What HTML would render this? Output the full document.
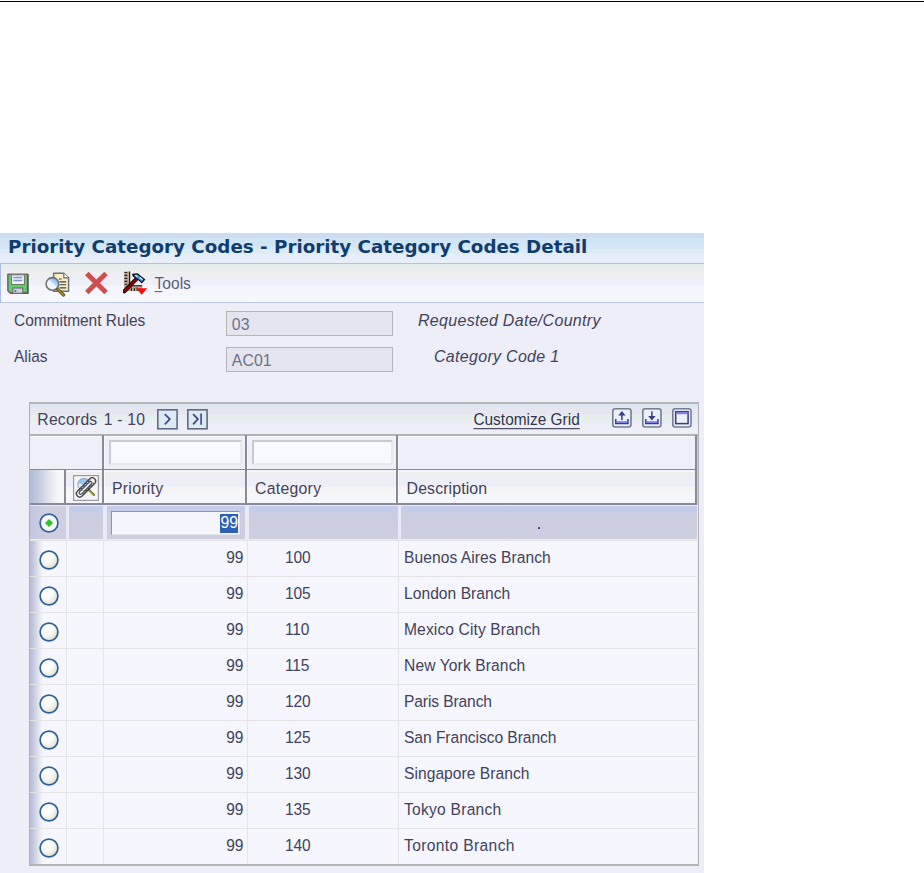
<!DOCTYPE html>
<html>
<head>
<meta charset="utf-8">
<title>Priority Category Codes - Priority Category Codes Detail</title>
<style>
html,body{margin:0;padding:0;background:#fff;}
body{width:924px;height:873px;position:relative;overflow:hidden;font-family:"Liberation Sans",sans-serif;color:#42425a;}
.abs{position:absolute;}
#topline{left:0;top:1px;width:924px;height:1px;background:#000;}
#panel{left:0;top:233px;width:704px;height:640px;background:#eeeef8;}
#titlebar{left:0;top:233px;width:704px;height:30px;background:linear-gradient(#cddcf5 0px,#cddcf5 4px,#cbe3f4 5px,#d2e5f5 10px,#d8e8f6 16px,#dceef6 17px,#dde9f6 19px,#e4edf8 21px,#e8eefa 30px);}
#title{left:8px;top:236px;white-space:nowrap;font-family:"DejaVu Sans","Liberation Sans",sans-serif;font-weight:bold;font-size:18.3px;line-height:22px;color:#103d6d;}
#toolbar{left:0;top:263px;width:703px;height:38px;border:1px solid #b7c1d8;border-right:none;border-left-color:#a9bde0;border-bottom-color:#b9c7e0;background:linear-gradient(#e6eeee 0px,#e8eeec 6px,#efefef 7px,#efefef 11px,#eeeef7 12px,#efeff8 20px,#f5f5fd 22px,#f7f7fe 38px);}
.t{white-space:nowrap;line-height:18px;transform:scaleY(1.055);transform-origin:0 14.4px;}
.lbl{font-size:15.45px;}
.it{font-style:italic;font-size:16px;letter-spacing:0.3px;}
.ro{border:1px solid #b6b6b6;background:#e5e5ef;box-sizing:border-box;}
.rotxt{font-size:15.9px;color:#707088;letter-spacing:0.05px;}
#grid{left:29px;top:402px;width:670px;height:464px;box-sizing:border-box;background:linear-gradient(#dde5f0 0px,#dde5f0 4.6px,#e6e6f0 5.2px,#e6e6f0 12.8px,#e6eeee 13.4px,#e6eeee 19.3px,#eeeef8 19.9px,#eeeef8 40px);}
.hl{background:#8a8a96;}
.cell{font-size:15.6px;}
.rl{left:30px;width:667px;height:1.3px;background:#e3e3e5;}
.cl{top:505px;width:1.3px;height:359px;background:#e4e4e6;}
.radio{width:20px;height:20px;box-sizing:border-box;border:1.7px solid #2f6196;border-radius:50%;background:radial-gradient(circle at 35% 32%,#ffffff 0%,#fcfcfc 40%,#e0e0d4 100%);}
.sel{background:linear-gradient(#c2cce9 0px,#c4cde8 5px,#cdcde0 8px,#cecee0 100%);}
.pg{width:21px;height:20px;box-sizing:border-box;border:1.5px solid #6a7a96;background:#f4f6fc;}
</style>
</head>
<body>
<div id="topline" class="abs"></div>
<div id="panel" class="abs"></div>
<div id="titlebar" class="abs"></div>
<div id="title" class="abs">Priority Category Codes - Priority Category Codes Detail</div>
<div id="toolbar" class="abs"></div>
<svg class="abs" style="left:7px;top:272.6px" width="23" height="23" viewBox="0 0 23 23"><path d="M0.9 1.2 H20.7 V20.3 H3.8 L0.9 17.6 Z" fill="#60cf69" stroke="#6a6a6a" stroke-width="1.6" stroke-linejoin="round"/><path d="M20.7 1.2 V20.3 H3.8" fill="none" stroke="#585858" stroke-width="1.6"/><rect x="4.5" y="1.8" width="12.9" height="9.7" fill="#f6f6ff" stroke="#757575" stroke-width="1.1"/><rect x="6.4" y="3.7" width="8.8" height="1.6" fill="#8092d2"/><rect x="6.4" y="6.7" width="8.8" height="1.6" fill="#8092d2"/><rect x="5.8" y="15" width="10" height="5.3" fill="#d2d2d8" stroke="#6a6a6a" stroke-width="1.1"/><rect x="7.6" y="17.1" width="1.7" height="1.7" fill="#3a55cc"/></svg>
<svg class="abs" style="left:44.5px;top:271.5px" width="26" height="25" viewBox="0 0 26 25"><defs><linearGradient id="lg" x1="0.85" y1="0.1" x2="0.2" y2="0.85"><stop offset="0" stop-color="#62b0f0"/><stop offset="0.45" stop-color="#c4e2fa"/><stop offset="0.55" stop-color="#eef6fe"/><stop offset="1" stop-color="#f4f8ff"/></linearGradient></defs><path d="M8.6 1.2 H18.8 L23.6 5.8 V19.2 H8.6 Z" fill="#f7efc8" stroke="#6e6e6e" stroke-width="1.4" stroke-linejoin="round"/><path d="M18.8 1.2 V5.8 H23.6" fill="#fffdf0" stroke="#6e6e6e" stroke-width="1.2"/><path d="M13.8 7 H16.6 M14.6 9.9 H21.2 M14.6 12.8 H21.2 M14.6 15.9 H21.2" stroke="#3e3e3e" stroke-width="1.1"/><circle cx="7.4" cy="11.9" r="6.3" fill="url(#lg)" stroke="#707070" stroke-width="1.6"/><path d="M12.6 17.4 L18.6 23" stroke="#5e5414" stroke-width="3.2" stroke-linecap="round"/><path d="M12.6 17.4 L18.6 23" stroke="#97872c" stroke-width="1.8" stroke-linecap="round"/></svg>
<svg class="abs" style="left:84px;top:271px" width="25" height="24" viewBox="0 0 25 24"><path d="M2.8 2.6 L22 21.4 M22 2.6 L2.8 21.4" stroke="#d24c4c" stroke-width="4.9" stroke-linecap="butt"/></svg>
<svg class="abs" style="left:123px;top:271px" width="25" height="24" viewBox="0 0 25 24"><rect x="1.2" y="0.5" width="5.9" height="19.6" fill="#b6a791"/><rect x="6" y="0.5" width="1.2" height="14" fill="#2a2020"/><path d="M1.4 1.5 H4.2 M1.4 4.4 H4.2 M1.4 7.4 H4.2 M1.4 10.4 H4.2 M1.4 13.3 H4.2" stroke="#2a2020" stroke-width="1.1"/><rect x="7" y="14.2" width="12.2" height="5.9" fill="#b6a791"/><rect x="6.4" y="14" width="12.8" height="1.4" fill="#4a4038"/><path d="M8.4 16.6 V20 M11.4 17 V20 M14.2 16.6 V20" stroke="#3a3028" stroke-width="1.2"/><path d="M1.4 20.3 L13.2 8.2" stroke="#160606" stroke-width="4" stroke-linecap="round"/><path d="M1.8 20 L13.2 8.4" stroke="#8c0808" stroke-width="2.2" stroke-linecap="round"/><path d="M9.2 2.8 L14.6 2.2 L22.4 8.6 L18.8 12.4 L16 9.8 L13 7.8 L9.6 5.2 Z" fill="#0c0c14"/><path d="M11 4 L14 3.6 L20.6 8.6 L18.6 10.8 L16.6 8.8 L13.6 7 Z" fill="#2f9ee8"/><path d="M12.2 4.2 L14.4 5.6 M16.8 6.6 L19.4 8.4" stroke="#eaf6ff" stroke-width="1.2"/><path d="M13.3 17.2 H24.1 L18.7 23.8 Z" fill="#fb0a0a"/></svg>
<div class="abs t" style="left:154.5px;top:274.5px;font-size:15.6px;color:#5c5c7a;"><span style="text-decoration:underline;text-underline-offset:2.3px;">T</span>ools</div>
<div class="abs t lbl" style="left:14px;top:311.5px;">Commitment Rules</div>
<div class="abs t lbl" style="left:14px;top:347.5px;">Alias</div>
<div class="abs ro" style="left:226.4px;top:311px;width:166.6px;height:25px;"></div>
<div class="abs ro" style="left:226.4px;top:347px;width:166.6px;height:25px;"></div>
<div class="abs t rotxt" style="left:231.8px;top:315.9px;">03</div>
<div class="abs t rotxt" style="left:231.8px;top:351.9px;">AC01</div>
<div class="abs t it" style="left:418px;top:311.5px;">Requested Date/Country</div>
<div class="abs t it" style="left:434px;top:347.5px;">Category Code 1</div>
<div id="grid" class="abs"></div>
<div class="abs" style="left:29px;top:402.2px;width:670px;height:1.7px;background:#afb5b5;"></div>
<div class="abs" style="left:28.8px;top:402.2px;width:1.3px;height:463.8px;background:#b0b0b0;"></div>
<div class="abs" style="left:697.8px;top:402.2px;width:1.5px;height:463.8px;background:#b2b2b2;"></div>
<div class="abs" style="left:29px;top:864.4px;width:670.3px;height:1.8px;background:#b2b2b2;"></div>
<div class="abs t cell" style="left:37.3px;top:410.7px;font-size:15.7px;letter-spacing:0.25px;">Records <span style="margin-left:1.6px">1 - 10</span></div>
<svg class="abs" style="left:157.3px;top:408.7px" width="22" height="22" viewBox="0 0 22 22"><rect x="0.8" y="0.8" width="19.3" height="19" fill="#ddeaf4" stroke="#5f6b82" stroke-width="1.6"/><path d="M7.8 5.2 L12.8 10.1 L7.8 15.4" fill="none" stroke="#3c4888" stroke-width="1.7"/></svg>
<svg class="abs" style="left:187.2px;top:408.7px" width="22" height="22" viewBox="0 0 22 22"><rect x="0.8" y="0.8" width="19.3" height="19" fill="#ddeaf4" stroke="#5f6b82" stroke-width="1.6"/><path d="M6.1 5.2 L10.9 10.1 L6.1 15.4" fill="none" stroke="#3c4888" stroke-width="1.7"/><path d="M14.1 4.4 V15.8" fill="none" stroke="#3c4888" stroke-width="1.6"/></svg>
<div class="abs t cell" style="left:473.4px;top:411px;font-size:15.45px;text-decoration:underline;text-underline-offset:2.6px;text-decoration-thickness:1.3px;color:#34344c;">Customize Grid</div>
<svg class="abs" style="left:612.2px;top:408.2px" width="21" height="20" viewBox="0 0 21 20"><rect x="0.8" y="0.8" width="18.2" height="18.2" rx="2.5" ry="2.5" fill="#eaf0f9" stroke="#747e8e" stroke-width="1.6"/><path d="M9.9 2.9 L6.2 7.5 H13.6 Z" fill="#3c3c80"/><rect x="9.15" y="6.5" width="1.5" height="5.6" fill="#3c3c80"/><path d="M3.8 11 V15.6 H16 V11" fill="none" stroke="#3a3a82" stroke-width="1.5"/><rect x="4.6" y="13.2" width="10.6" height="1.7" fill="#7c7cf0"/></svg>
<svg class="abs" style="left:642.2px;top:408.2px" width="21" height="20" viewBox="0 0 21 20"><rect x="0.8" y="0.8" width="18.2" height="18.2" rx="2.5" ry="2.5" fill="#eaf0f9" stroke="#747e8e" stroke-width="1.6"/><path d="M9.9 12.6 L6.2 8 H13.6 Z" fill="#3c3c80"/><rect x="9.15" y="3.3" width="1.5" height="5.6" fill="#3c3c80"/><path d="M3.8 11 V15.6 H16 V11" fill="none" stroke="#3a3a82" stroke-width="1.5"/><rect x="4.6" y="13.2" width="10.6" height="1.7" fill="#7c7cf0"/></svg>
<svg class="abs" style="left:672.2px;top:408.2px" width="21" height="20" viewBox="0 0 21 20"><rect x="0.8" y="0.8" width="18.2" height="18.2" rx="2.5" ry="2.5" fill="#eaf0f9" stroke="#747e8e" stroke-width="1.6"/><rect x="3.7" y="3.7" width="12.4" height="11.9" fill="#eef0fa" stroke="#3a3a82" stroke-width="1.5"/><rect x="4.5" y="4.3" width="10.8" height="1.9" fill="#7c7cf0"/></svg>
<div class="abs" style="left:30px;top:434px;width:667px;height:71px;background:#efeff7;"></div>
<div class="abs" style="left:30px;top:470px;width:667px;height:34px;background:linear-gradient(#f4f4fc 0px,#f4f4fc 1.5px,#eeeeee 1.6px,#eeeeee 6px,#eeeef7 6.6px,#eeeef7 16.5px,#f5f5f5 17px,#f5f5f5 23px,#f6f6fd 23.6px,#f6f6fd 34px);"></div>
<div class="abs" style="left:30px;top:470px;width:35px;height:34px;background:linear-gradient(90deg,#b2bed8 0px,#bfc8dd 7px,#d0d5e4 13px,#e2e5ee 19px,#f1f2f7 25px,#f8f8fc 30px,#f6f6fb 35px);"></div>
<div class="abs" style="left:30px;top:505px;width:667px;height:359px;background:#f6f6fe;"></div>
<div class="abs" style="left:30px;top:505px;width:14px;height:359px;background:linear-gradient(90deg,#b5bad6 0px,#c9cce0 4px,#e0e2ee 8px,#f6f6fe 13px);"></div>
<div class="abs" style="left:30px;top:433.9px;width:668px;height:1.7px;background:#afb5b5;"></div>
<div class="abs" style="left:30px;top:435.6px;width:666px;height:0.8px;background:#f7f7ff;"></div>
<div class="abs hl" style="left:30px;top:468.7px;width:667px;height:1.5px;"></div>
<div class="abs hl" style="left:30px;top:503.1px;width:667px;height:1.5px;"></div>
<div class="abs hl" style="left:102px;top:435.4px;width:1.6px;height:69px;"></div>
<div class="abs" style="left:103.6px;top:436px;width:0.9px;height:32.7px;background:#f7f7ff;"></div>
<div class="abs" style="left:103.6px;top:470.2px;width:0.9px;height:32.9px;background:#f9f9ff;"></div>
<div class="abs hl" style="left:245px;top:435.4px;width:1.6px;height:69px;"></div>
<div class="abs" style="left:246.6px;top:436px;width:0.9px;height:32.7px;background:#f7f7ff;"></div>
<div class="abs" style="left:246.6px;top:470.2px;width:0.9px;height:32.9px;background:#f9f9ff;"></div>
<div class="abs hl" style="left:396.2px;top:435.4px;width:1.6px;height:69px;"></div>
<div class="abs" style="left:397.8px;top:436px;width:0.9px;height:32.7px;background:#f7f7ff;"></div>
<div class="abs" style="left:397.8px;top:470.2px;width:0.9px;height:32.9px;background:#f9f9ff;"></div>
<div class="abs hl" style="left:695px;top:435.4px;width:1.6px;height:69px;"></div>
<div class="abs hl" style="left:64.4px;top:470px;width:1.6px;height:34px;"></div>
<div class="abs" style="left:696.6px;top:435.6px;width:1.2px;height:69px;background:#cdd0dc;"></div>
<div class="abs" style="left:109px;top:440px;width:133px;height:25px;box-sizing:border-box;border:2px solid;border-color:#c3cdcd #e6eaee #e6eaee #c3cdcd;background:#f8f8ff;"></div>
<div class="abs" style="left:252px;top:440px;width:141px;height:25px;box-sizing:border-box;border:2px solid;border-color:#c3cdcd #e6eaee #e6eaee #c3cdcd;background:#f8f8ff;"></div>
<svg class="abs" style="left:73px;top:474.5px" width="26" height="26" viewBox="0 0 26 26"><rect x="0.6" y="0.6" width="24.8" height="24.8" fill="#f5f5fc" stroke="#9a9a9a" stroke-width="1.2"/><circle cx="11" cy="9.5" r="6.2" fill="#e4f0fb" stroke="#a4aab0" stroke-width="1.2"/><path d="M5.6 8.4 A5.6 5.6 0 0 1 15 5 L10.5 9.5 Z" fill="#7db8ee" opacity="0.75"/><path d="M16 15 L21 19.8" stroke="#8c8a3c" stroke-width="2.4" stroke-linecap="round"/><g transform="translate(13 12.4) rotate(-45)" opacity="0.82"><rect x="-12.2" y="-3.4" width="24.4" height="6.8" rx="3.4" fill="#f2f2f6" fill-opacity="0.5" stroke="#202020" stroke-width="1.3"/><rect x="-9.2" y="-1.5" width="17" height="3" rx="1.5" fill="none" stroke="#202020" stroke-width="1.1"/><path d="M-7 -2.4 H9 M-7 2.4 H9" stroke="#202020" stroke-width="1" stroke-dasharray="1.2 1.2"/></g></svg>
<div class="abs t cell" style="left:112px;top:480px;font-size:15.8px;letter-spacing:0.28px;">Priority</div>
<div class="abs t cell" style="left:255px;top:480px;font-size:15.8px;letter-spacing:0.28px;">Category</div>
<div class="abs t cell" style="left:406.6px;top:480px;font-size:15.9px;letter-spacing:0.1px;">Description</div>
<div class="abs rl" style="top:539.7px;"></div>
<div class="abs rl" style="top:575.7px;"></div>
<div class="abs rl" style="top:611.7px;"></div>
<div class="abs rl" style="top:647.7px;"></div>
<div class="abs rl" style="top:683.7px;"></div>
<div class="abs rl" style="top:719.7px;"></div>
<div class="abs rl" style="top:755.7px;"></div>
<div class="abs rl" style="top:791.7px;"></div>
<div class="abs rl" style="top:827.7px;"></div>
<div class="abs cl" style="left:65.7px;"></div>
<div class="abs cl" style="left:103.2px;"></div>
<div class="abs cl" style="left:246.6px;"></div>
<div class="abs cl" style="left:397.8px;"></div>
<div class="abs" style="left:30px;top:505px;width:667px;height:35px;background:#eaeaf5;"></div>
<div class="abs" style="left:30px;top:505.8px;width:35.5px;height:33.3px;background:linear-gradient(90deg,#c0c5de 0px,#c9cbe0 8px,#cfcfe1 16px,#cfcfe1 36px);"></div>
<div class="abs sel" style="left:69px;top:505.5px;width:34px;height:33.6px;"></div>
<div class="abs sel" style="left:106.5px;top:505.5px;width:138.5px;height:33.6px;"></div>
<div class="abs sel" style="left:249px;top:505.5px;width:148.5px;height:33.6px;"></div>
<div class="abs sel" style="left:400.5px;top:505.5px;width:296.0px;height:33.6px;"></div>
<div class="abs" style="left:111px;top:511px;width:129px;height:24px;box-sizing:border-box;border:1.5px solid;border-color:#8f9599 #dfe3ea #dfe3ea #8f9599;background:#f5f5fd;"></div>
<div class="abs" style="left:220.3px;top:513.8px;width:18px;height:19.2px;background:#2f5fb4;"></div>
<div class="abs t cell" style="left:220.3px;top:514.3px;width:18px;text-align:center;color:#fff;font-size:15.8px;">99</div>
<div class="abs" style="left:538.3px;top:527.2px;width:2.1px;height:2.3px;background:#46307c;border-radius:0.6px;"></div>
<svg class="abs" style="left:38.6px;top:513.2px" width="20" height="20" viewBox="0 0 20 20"><defs><radialGradient id="rg" cx="0.36" cy="0.32" r="0.75"><stop offset="0" stop-color="#ffffff"/><stop offset="0.45" stop-color="#fbfbfb"/><stop offset="1" stop-color="#dcdccc"/></radialGradient></defs><circle cx="10" cy="10" r="8.9" fill="#fbfbfd" stroke="#2f6196" stroke-width="1.7"/><path d="M10 5.9 L14.1 10 L10 14.1 L5.9 10 Z" fill="#2ec42e"/></svg>
<svg class="abs" style="left:38.6px;top:549.9px" width="20" height="20" viewBox="0 0 20 20"><circle cx="10" cy="10" r="8.9" fill="url(#rg)" stroke="#2f6196" stroke-width="1.7"/></svg>
<div class="abs t cell" style="left:200px;top:549.3px;width:43.4px;text-align:right;font-size:15.5px;">99</div>
<div class="abs t cell" style="left:285px;top:549.3px;font-size:15.5px;letter-spacing:-0.15px;">100</div>
<div class="abs t cell" style="left:404px;top:549px;letter-spacing:0.062px;">Buenos Aires Branch</div>
<svg class="abs" style="left:38.6px;top:585.9px" width="20" height="20" viewBox="0 0 20 20"><circle cx="10" cy="10" r="8.9" fill="url(#rg)" stroke="#2f6196" stroke-width="1.7"/></svg>
<div class="abs t cell" style="left:200px;top:585.3px;width:43.4px;text-align:right;font-size:15.5px;">99</div>
<div class="abs t cell" style="left:285px;top:585.3px;font-size:15.5px;letter-spacing:-0.15px;">105</div>
<div class="abs t cell" style="left:404px;top:585px;letter-spacing:0.039px;">London Branch</div>
<svg class="abs" style="left:38.6px;top:621.9px" width="20" height="20" viewBox="0 0 20 20"><circle cx="10" cy="10" r="8.9" fill="url(#rg)" stroke="#2f6196" stroke-width="1.7"/></svg>
<div class="abs t cell" style="left:200px;top:621.3px;width:43.4px;text-align:right;font-size:15.5px;">99</div>
<div class="abs t cell" style="left:285px;top:621.3px;font-size:15.5px;letter-spacing:-0.15px;">110</div>
<div class="abs t cell" style="left:404px;top:621px;letter-spacing:0.113px;">Mexico City Branch</div>
<svg class="abs" style="left:38.6px;top:657.9px" width="20" height="20" viewBox="0 0 20 20"><circle cx="10" cy="10" r="8.9" fill="url(#rg)" stroke="#2f6196" stroke-width="1.7"/></svg>
<div class="abs t cell" style="left:200px;top:657.3px;width:43.4px;text-align:right;font-size:15.5px;">99</div>
<div class="abs t cell" style="left:285px;top:657.3px;font-size:15.5px;letter-spacing:-0.15px;">115</div>
<div class="abs t cell" style="left:404px;top:657px;letter-spacing:0.116px;">New York Branch</div>
<svg class="abs" style="left:38.6px;top:693.9px" width="20" height="20" viewBox="0 0 20 20"><circle cx="10" cy="10" r="8.9" fill="url(#rg)" stroke="#2f6196" stroke-width="1.7"/></svg>
<div class="abs t cell" style="left:200px;top:693.3px;width:43.4px;text-align:right;font-size:15.5px;">99</div>
<div class="abs t cell" style="left:285px;top:693.3px;font-size:15.5px;letter-spacing:-0.15px;">120</div>
<div class="abs t cell" style="left:404px;top:693px;letter-spacing:-0.116px;">Paris Branch</div>
<svg class="abs" style="left:38.6px;top:729.9px" width="20" height="20" viewBox="0 0 20 20"><circle cx="10" cy="10" r="8.9" fill="url(#rg)" stroke="#2f6196" stroke-width="1.7"/></svg>
<div class="abs t cell" style="left:200px;top:729.3px;width:43.4px;text-align:right;font-size:15.5px;">99</div>
<div class="abs t cell" style="left:285px;top:729.3px;font-size:15.5px;letter-spacing:-0.15px;">125</div>
<div class="abs t cell" style="left:404px;top:729px;letter-spacing:-0.049px;">San Francisco Branch</div>
<svg class="abs" style="left:38.6px;top:765.9px" width="20" height="20" viewBox="0 0 20 20"><circle cx="10" cy="10" r="8.9" fill="url(#rg)" stroke="#2f6196" stroke-width="1.7"/></svg>
<div class="abs t cell" style="left:200px;top:765.3px;width:43.4px;text-align:right;font-size:15.5px;">99</div>
<div class="abs t cell" style="left:285px;top:765.3px;font-size:15.5px;letter-spacing:-0.15px;">130</div>
<div class="abs t cell" style="left:404px;top:765px;letter-spacing:0.044px;">Singapore Branch</div>
<svg class="abs" style="left:38.6px;top:801.9px" width="20" height="20" viewBox="0 0 20 20"><circle cx="10" cy="10" r="8.9" fill="url(#rg)" stroke="#2f6196" stroke-width="1.7"/></svg>
<div class="abs t cell" style="left:200px;top:801.3px;width:43.4px;text-align:right;font-size:15.5px;">99</div>
<div class="abs t cell" style="left:285px;top:801.3px;font-size:15.5px;letter-spacing:-0.15px;">135</div>
<div class="abs t cell" style="left:404px;top:801px;letter-spacing:0.251px;">Tokyo Branch</div>
<svg class="abs" style="left:38.6px;top:837.9px" width="20" height="20" viewBox="0 0 20 20"><circle cx="10" cy="10" r="8.9" fill="url(#rg)" stroke="#2f6196" stroke-width="1.7"/></svg>
<div class="abs t cell" style="left:200px;top:837.3px;width:43.4px;text-align:right;font-size:15.5px;">99</div>
<div class="abs t cell" style="left:285px;top:837.3px;font-size:15.5px;letter-spacing:-0.15px;">140</div>
<div class="abs t cell" style="left:404px;top:837px;letter-spacing:0.364px;">Toronto Branch</div>
</body>
</html>
